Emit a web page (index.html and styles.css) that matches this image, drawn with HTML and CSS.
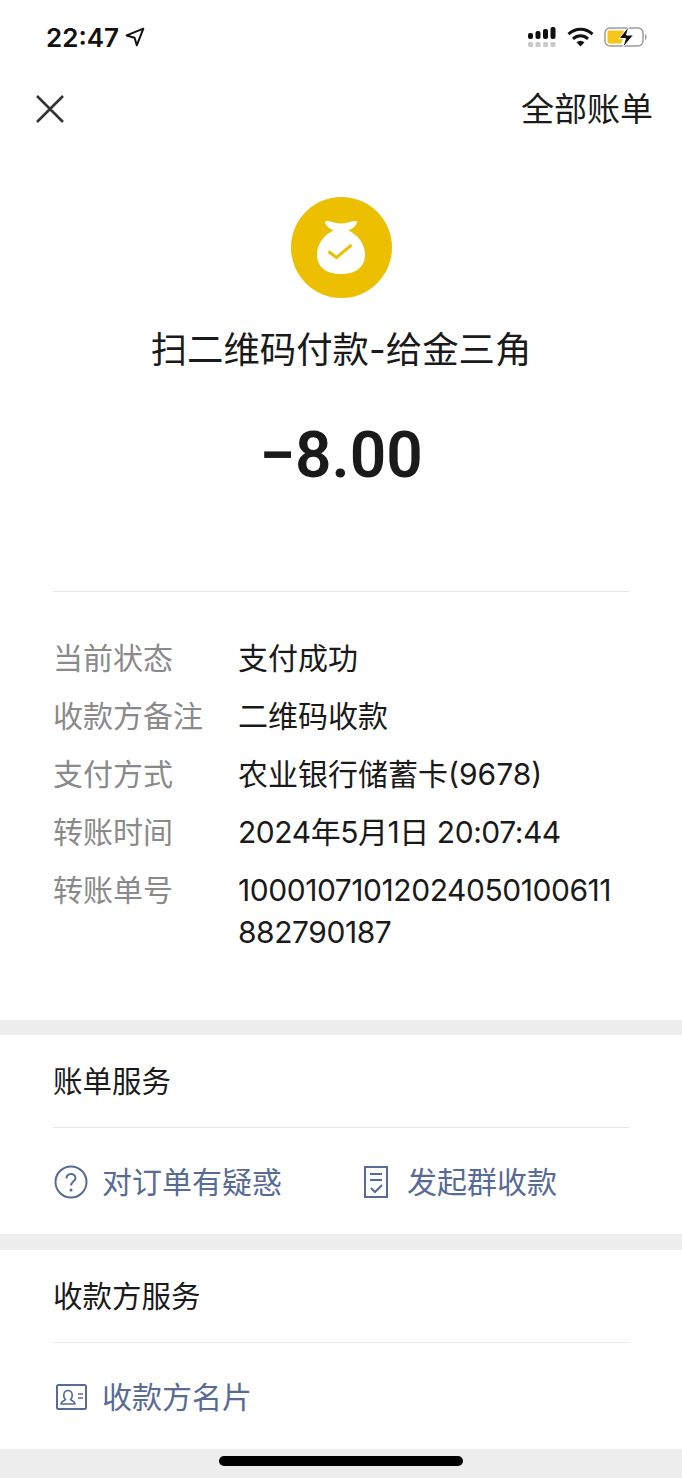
FILE: index.html
```html
<!DOCTYPE html>
<html lang="zh-CN">
<head>
  <meta charset="UTF-8">
  <meta name="viewport" content="width=device-width, initial-scale=1.0">
  <title>账单详情</title>
  <link rel="stylesheet" href="styles.css">
</head>
<body>
  <div class="page">
    <div class="status-bar">
      <div class="status-left">
        <span class="time">22:47</span>
        <svg class="loc-icon" width="20" height="20" viewBox="0 0 18 18"><path d="M1.500 7.600 16.500 1.500 10.600 16.500 8.600 9.600Z" fill="none" stroke="#111" stroke-width="1.800" stroke-linejoin="round"/></svg>
      </div>
      <div class="status-right">
        <svg width="30" height="20" viewBox="0 0 30 20">
          <g fill="#111"><rect x="1" y="6" width="5" height="6" rx="2"/><rect x="8.500" y="4" width="5" height="8" rx="2"/><rect x="16" y="2" width="5" height="10" rx="2"/><rect x="23.500" y="0" width="5" height="12" rx="2"/></g>
          <g fill="#c9c9c9"><rect x="1" y="15" width="5" height="5" rx="1.500"/><rect x="8.500" y="15" width="5" height="5" rx="1.500"/><rect x="16" y="15" width="5" height="5" rx="1.500"/><rect x="23.500" y="15" width="5" height="5" rx="1.500"/></g>
        </svg>
        <svg class="wifi" width="27" height="20" viewBox="0 0 27 20"><g fill="none" stroke="#111" stroke-width="3"><path d="M1.500 7.200C8.500 .6 18.500 .6 25.500 7.200"/><path d="M6 11.800C10.500 7.800 16.500 7.800 21 11.800"/></g><path d="M9.500 15.200C12 13.200 15 13.200 17.500 15.200L13.500 19.500Z" fill="#111"/></svg>
        <svg class="battery" width="44" height="24" viewBox="0 0 44 24">
          <rect x="1" y="3" width="38" height="18" rx="5" fill="none" stroke="#9c9c9c" stroke-width="1.500"/>
          <path d="M41 9c2 .5 2 5.500 0 6z" fill="#9c9c9c"/>
          <path d="M5 5.500h15l-3 6.500h3l-3 6.500H5a1.500 1.500 0 0 1-1.500-1.500V7A1.500 1.500 0 0 1 5 5.500z" fill="#f5c518"/>
          <path d="M25 1 15 13.500h6.500L18.500 23 29.500 10h-7z" fill="#111" stroke="#fff" stroke-width="1"/>
        </svg>
      </div>
    </div>

    <div class="nav">
      <svg width="30" height="30" viewBox="0 0 30 30"><path d="M2 2 28 28M28 2 2 28" stroke="#333" stroke-width="2.600" fill="none"/></svg>
      <span class="nav-link">全部账单</span>
    </div>

    <div class="summary">
      <div class="bag">
        <svg width="50" height="58" viewBox="0 0 50 58">
          <path d="M11 2c5 .5 9 2.500 14 2.500S34 2.500 39 2c2 0 2.500 1.500 1 3.500-1.500 2.500-4 4.500-7.500 6 9 4 16.500 13 16.500 24C49 48 40 55 25 55S1 48 1 35.500c0-11 7.500-20 16.500-24-3.500-1.500-6-3.500-7.500-6C8.500 3.500 9 2 11 2z" fill="#fff"/>
          <path d="M12.500 32.500 20.500 38.500 35.500 26" fill="none" stroke="#ecc000" stroke-width="3"/>
        </svg>
      </div>
      <div class="title">扫二维码付款-给金三角</div>
      <div class="amount">−8.00</div>
    </div>

    <div class="details">
      <div class="row"><span class="label">当前状态</span><span class="value">支付成功</span></div>
      <div class="row"><span class="label">收款方备注</span><span class="value">二维码收款</span></div>
      <div class="row"><span class="label">支付方式</span><span class="value">农业银行储蓄卡(9678)</span></div>
      <div class="row"><span class="label">转账时间</span><span class="value tight">2024年5月1日 20:07:44</span></div>
      <div class="row"><span class="label">转账单号</span><span class="value tight">10001071012024050100611<br>882790187</span></div>
    </div>

    <div class="section">
      <div class="section-title">账单服务</div>
      <div class="links">
        <a class="link link-wide">
          <svg width="34" height="34" viewBox="0 0 34 34"><circle cx="17" cy="17" r="15.500" fill="none" stroke="#576b95" stroke-width="2"/><path d="M12.500 13.500c0-6 9-6 9-.5 0 3.500-4.500 3.500-4.500 7.500" fill="none" stroke="#576b95" stroke-width="2"/><circle cx="17" cy="25" r="1.500" fill="#576b95"/></svg>
          <span>对订单有疑惑</span>
        </a>
        <a class="link link-bill">
          <svg width="24" height="32" viewBox="0 0 24 32"><path d="M1 1h22v30H1zM6 8h12M6 14h12" fill="none" stroke="#576b95" stroke-width="2"/><path d="M7 22l4 4 7-7" fill="none" stroke="#576b95" stroke-width="2"/></svg>
          <span>发起群收款</span>
        </a>
      </div>
    </div>

    <div class="section payee">
      <div class="section-title">收款方服务</div>
      <div class="links">
        <a class="link link-card">
          <svg width="31" height="26" viewBox="0 0 31 26"><rect x="1" y="1" width="29" height="24" rx="1.500" fill="none" stroke="#576b95" stroke-width="2"/><path d="M5 20c0-3 3.500-3 4.500-4.500-3-3-2-9 2.500-9s5.500 6 2.500 9c1 1.500 4.500 1.500 4.500 4.500z" fill="none" stroke="#576b95" stroke-width="1.600"/><path d="M22 10h5M22 14h5" stroke="#576b95" stroke-width="1.600"/></svg>
          <span>收款方名片</span>
        </a>
      </div>
    </div>

    <div class="home-area"><div class="home-bar"></div></div>
  </div>
</body>
</html>
```

FILE: styles.css
```css
* {
  box-sizing: border-box;
}
body {
  margin: 0;
  background-color: #ededed;
  font-family: "Inter", "Noto Sans CJK SC", sans-serif;
  color: #1a1a1a;
}
.page {
  width: 682px;
  height: 1478px;
  overflow: hidden;
  display: flex;
  flex-direction: column;
}
.status-bar {
  height: 74px;
  padding: 0 34px 0 46px;
  background-color: #fff;
  display: flex;
  justify-content: space-between;
  align-items: center;
}
.status-left {
  display: flex;
  align-items: center;
  gap: 6px;
}
.time {
  font-size: 26px;
  font-weight: 600;
  color: #111;
}
.status-right {
  display: flex;
  align-items: center;
  gap: 10px;
}
.nav {
  height: 72px;
  padding: 0 29px 2px 35px;
  background-color: #fff;
  display: flex;
  justify-content: space-between;
  align-items: center;
}
.nav-link {
  font-size: 33px;
  line-height: 40px;
}
.summary {
  height: 445px;
  padding-top: 51px;
  background-color: #fff;
  display: flex;
  flex-direction: column;
  align-items: center;
}
.bag {
  width: 101px;
  height: 101px;
  border-radius: 50%;
  background-color: #ecc000;
  display: flex;
  align-items: center;
  justify-content: center;
}
.title {
  margin-top: 27px;
  font-size: 36.400px;
  line-height: 50px;
  white-space: nowrap;
}
.amount {
  margin-top: 41px;
  font-family: Roboto, sans-serif;
  font-size: 64px;
  line-height: 80px;
  font-weight: 600;
}
.details {
  height: 429px;
  padding: 45px 53px 0;
  background-color: #fff;
}
.details::before {
  content: "";
  display: block;
  height: 1px;
  margin-top: -45px;
  margin-bottom: 45px;
  background-color: #e8e8e8;
}
.row {
  display: flex;
  margin-bottom: 16px;
  font-size: 30px;
  line-height: 42px;
}
.label {
  width: 185px;
  flex-shrink: 0;
  color: #8a8a8a;
}
.value {
  white-space: nowrap;
}
.tight {
  letter-spacing: -0.450px;
}
.section {
  height: 199px;
  margin-top: 15px;
  background-color: #fff;
  padding: 0 53px;
}
.section.payee {
  margin-top: 16px;
}
.section-title {
  height: 93px;
  font-size: 29.500px;
  line-height: 92px;
  border-bottom: 1px solid #e8e8e8;
}
.links {
  display: flex;
  height: 106px;
  padding-top: 2px;
  align-items: center;
}
.link {
  display: flex;
  align-items: center;
  gap: 14px;
  font-size: 30px;
  line-height: 42px;
  color: #576b95;
}
.link-wide {
  width: 311px;
  padding-left: 1px;
}
.link-bill {
  gap: 19px;
}
.link-card {
  gap: 15px;
  padding-left: 3px;
}
.home-area {
  flex: 1;
  display: flex;
  justify-content: center;
  padding-top: 7px;
}
.home-bar {
  width: 244px;
  height: 10px;
  border-radius: 5px;
  background-color: #000;
}
```
